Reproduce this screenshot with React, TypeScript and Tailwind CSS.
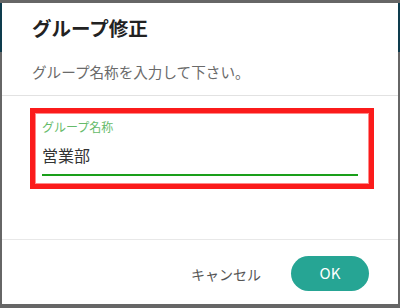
export default function App() {
  return (
    <div
      className="relative w-[400px] h-[308px] overflow-hidden bg-[#666666]"
      style={{ fontFamily: '"Noto Sans CJK JP", "Noto Sans", sans-serif' }}
    >
      {/* dimmed page header behind the modal */}
      <div className="mt-[3px] h-[49px] w-full bg-[#0e3c4d]" />

      {/* Dialog */}
      <div className="absolute left-[2px] top-[3px] w-[396px] h-[301px] bg-white flex flex-col">
        <div className="pt-[11px] px-[30px]">
          <h2 className="text-[19.5px] leading-[28px] font-bold text-[#222]">グループ修正</h2>
          <p className="mt-[20px] text-[14.6px] leading-[20px] text-[#6a6a6a]">グループ名称を入力して下さい。</p>
        </div>
        <div className="mt-[13px] h-px bg-[#e2e2e2]" />

        <div className="flex-1 pt-[12px] pl-[28px]">
          <div className="w-[344px] h-[81px] border-[5px] border-[#fb1b1b]">
            <div className="h-full border border-[#ff8a8a] pl-[6px] pr-[10px] pt-[5px]">
              <label className="block text-[12px] leading-[16px] text-[#66bb6a]">グループ名称</label>
              <div className="mt-[9px] text-[16px] leading-[22px] text-[#333]">営業部</div>
              <div className="mt-[8px] h-[2px] bg-[#1a9f1a]" />
            </div>
          </div>
        </div>

        <div className="h-px bg-[#e8e8e8]" />
        <div className="flex items-center justify-end gap-[30px] pr-[29px] pt-[16px] pb-[13px]">
          <button className="text-[14px] leading-[20px] text-[#555]">キャンセル</button>
          <button className="w-[78px] h-[35px] rounded-full bg-[#26a594] text-white text-[15px] font-normal">
            OK
          </button>
        </div>
      </div>
    </div>
  );
}
